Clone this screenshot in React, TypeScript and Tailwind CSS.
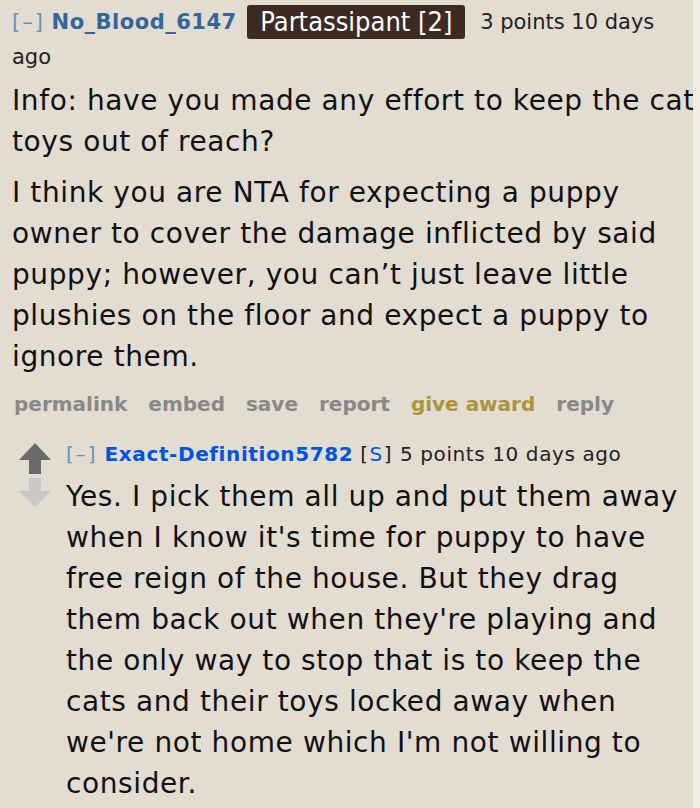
export default function App() {
  return (
    <div className="relative h-[808px] w-[700px] overflow-hidden bg-[#e3dcd1] text-[#111]">
      <div className="absolute right-0 top-0 h-full w-[7px] bg-[#f1eee9]" />
      <div className="w-[700px] pl-[12px] pt-[5px]">
        {/* top comment tagline */}
        <div className="font-['DejaVu_Sans',sans-serif] text-[21px] leading-[35px]">
          <span className="tracking-[2px] text-[#6f8fb6]">[–]</span>{" "}
          <span className="font-bold tracking-[0.5px] text-[#336699]">No_Blood_6147</span>{" "}
          <span className="mx-[4px] inline-block rounded-[3px] bg-[#3d2a22] px-[13px] font-['DejaVu_Sans_Condensed','DejaVu_Sans',sans-serif] text-[27px] leading-[34px] text-white align-[-2px]">
            Partassipant [2]
          </span>{" "}
          <span className="pl-[4px] text-[#222]">3 points 10 days ago</span>
        </div>

        <div className="mt-[5px] font-['DejaVu_Sans',sans-serif] text-[28px] leading-[41px] tracking-[0.6px]">
          <p>Info: have you made any effort to keep the cat toys out of reach?</p>
          <p className="mt-[10px]">
            I think you are NTA for expecting a puppy owner to cover the damage inflicted by said puppy; however, you can’t just leave little plushies on the floor and expect a puppy to ignore them.
          </p>
        </div>

        <div className="mt-[13px] flex gap-[21px] pl-[2px] font-['DejaVu_Sans',sans-serif] text-[20px] font-bold leading-[28px] text-[#888]">
          <span>permalink</span>
          <span>embed</span>
          <span>save</span>
          <span>report</span>
          <span className="text-[#ab953a]">give award</span>
          <span>reply</span>
        </div>

        {/* reply */}
        <div className="mt-[21px] flex">
          <div className="flex w-[54px] shrink-0 flex-col items-start pl-[7px] pt-[4px]">
            <svg width="32" height="31" viewBox="0 0 32 31">
              <path d="M16 0 L32 17 L22 17 L22 31 L10 31 L10 17 L0 17 Z" fill="#6b6b6b" />
            </svg>
            <svg className="mt-[4px]" width="32" height="29" viewBox="0 0 32 29">
              <path d="M10 0 L22 0 L22 13 L32 13 L16 29 L0 13 L10 13 Z" fill="#c8c8c8" />
            </svg>
          </div>
          <div className="min-w-0 flex-1 pr-[6px]">
            <div className="font-['DejaVu_Sans',sans-serif] text-[20px] leading-[30px] tracking-[0.6px] text-[#222]">
              <span className="tracking-[2px] text-[#6f8fb6]">[–]</span>{" "}
              <span className="font-bold text-[#0055df]">Exact-Definition5782</span>{" "}
              <span className="tracking-[1.5px]">
                [<span className="text-[#0055df]">S</span>]
              </span>{" "}
              5 points 10 days ago
            </div>
            <p className="mt-[7px] font-['DejaVu_Sans',sans-serif] text-[28px] leading-[41px] tracking-[0.6px]">
              Yes. I pick them all up and put them away when I know it's time for puppy to have free reign of the house. But they drag them back out when they're playing and the only way to stop that is to keep the cats and their toys locked away when we're not home which I'm not willing to consider.
            </p>
          </div>
        </div>
      </div>
    </div>
  );
}
